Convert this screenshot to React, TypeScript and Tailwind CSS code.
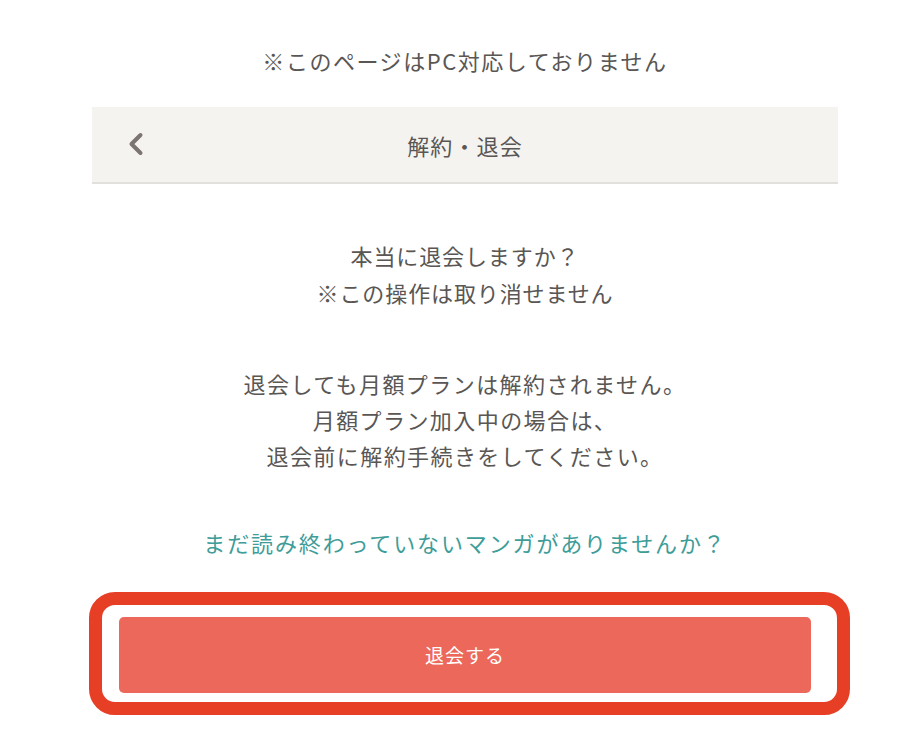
const jp = "font-['Noto_Sans_CJK_JP','Noto_Sans',sans-serif]";

function BackChevron() {
  return (
    <svg width="20" height="24" viewBox="0 0 20 24" fill="none" aria-hidden="true">
      <path
        d="M14.5 3 L5.5 12 L14.5 21"
        stroke="#7b7470"
        strokeWidth="4"
        strokeLinecap="round"
        strokeLinejoin="round"
      />
    </svg>
  );
}

export default function App() {
  return (
    <div className={`min-h-[742px] bg-white text-[#595654] ${jp}`}>
      <div className="ml-[92px] w-[746px]">
        <p className="pt-[42px] text-center text-[22px] leading-[36px] tracking-[0.07em]">
          ※このページはPC対応しておりません
        </p>

        <header className="relative mt-[29px] flex h-[77px] items-center justify-center border-b-2 border-[#e2e0dc] bg-[#f4f3f0]">
          <button className="absolute left-[34px] top-[25px] flex items-center justify-center">
            <BackChevron />
          </button>
          <h1 className="text-[22px] leading-[36px] tracking-[0.05em] font-normal">解約・退会</h1>
        </header>

        <div className="mt-[53px] text-center text-[22px] leading-[37px] tracking-[0.04em]">
          <p>本当に退会しますか？</p>
          <p>※この操作は取り消せません</p>
        </div>

        <div className="mt-[54px] text-center text-[22px] leading-[36px] tracking-[0.065em]">
          <p>退会しても月額プランは解約されません。</p>
          <p>月額プラン加入中の場合は、</p>
          <p>退会前に解約手続きをしてください。</p>
        </div>

        <p className="mt-[51px] text-center text-[22px] leading-[36px] tracking-[0.085em] text-[#3e9d99]">
          まだ読み終わっていないマンガがありませんか？
        </p>

        <div className="relative mx-[27px] mt-[57px]">
          <button className="flex h-[76px] w-full items-center justify-center rounded-[5px] bg-[#ec685a] text-[19px] tracking-[0.05em] text-white">
            退会する
          </button>
          <div className="pointer-events-none absolute -left-[30px] -right-[39px] -top-[25px] -bottom-[22px] rounded-[26px] border-[13px] border-[#e63f26]" />
        </div>
      </div>
    </div>
  );
}
